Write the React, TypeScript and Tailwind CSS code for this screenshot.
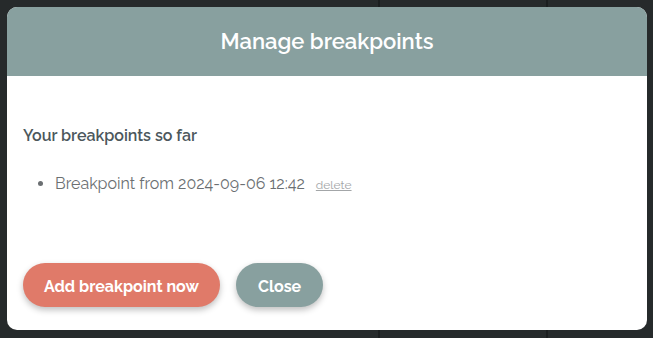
export default function App() {
  const font = { fontFamily: "Raleway, Lato, 'Open Sans', sans-serif" };
  return (
    <div className="relative h-[338px] w-full overflow-hidden bg-[#262a2b]" style={font}>
      {/* backdrop content behind the overlay */}
      <div className="flex h-full">
        <div className="w-[380px] border-r-2 border-[#1b1e1f]" />
        <div className="w-[168px] border-r-2 border-[#1b1e1f]" />
        <div className="flex-1" />
      </div>

      <div className="absolute inset-0 px-[7px] pt-[7px] pb-[8px]">
        <div className="flex h-full w-[640px] flex-col overflow-hidden rounded-[10px] bg-white">
          <div className="flex h-[69px] items-center justify-center bg-[#88a09f]">
            <h1 className="text-[22px] font-semibold text-white">Manage breakpoints</h1>
          </div>

          <div className="flex flex-1 flex-col px-[16px]">
            <h2 className="mt-[48px] text-[16px] font-semibold text-[#4c575c]">
              Your breakpoints so far
            </h2>
            <ul className="mt-[24px] list-disc pl-[32px] text-[16px] text-[#6b6f72]">
              <li>
                Breakpoint from 2024-09-06 12:42{" "}
                <a href="#" className="ml-[7px] text-[12px] text-[#a3a6a8] underline">
                  delete
                </a>
              </li>
            </ul>

            <div className="mt-auto mb-[23px] flex gap-[16px]">
              <button className="h-[44px] rounded-full bg-[#e07a69] px-[21px] pt-[3px] text-[16px] font-bold text-white shadow-[0_3px_6px_rgba(0,0,0,0.25)]">
                Add breakpoint now
              </button>
              <button className="h-[44px] rounded-full bg-[#88a09f] px-[22px] pt-[3px] text-[16px] font-bold text-white shadow-[0_3px_6px_rgba(0,0,0,0.25)]">
                Close
              </button>
            </div>
          </div>
        </div>
      </div>
    </div>
  );
}
